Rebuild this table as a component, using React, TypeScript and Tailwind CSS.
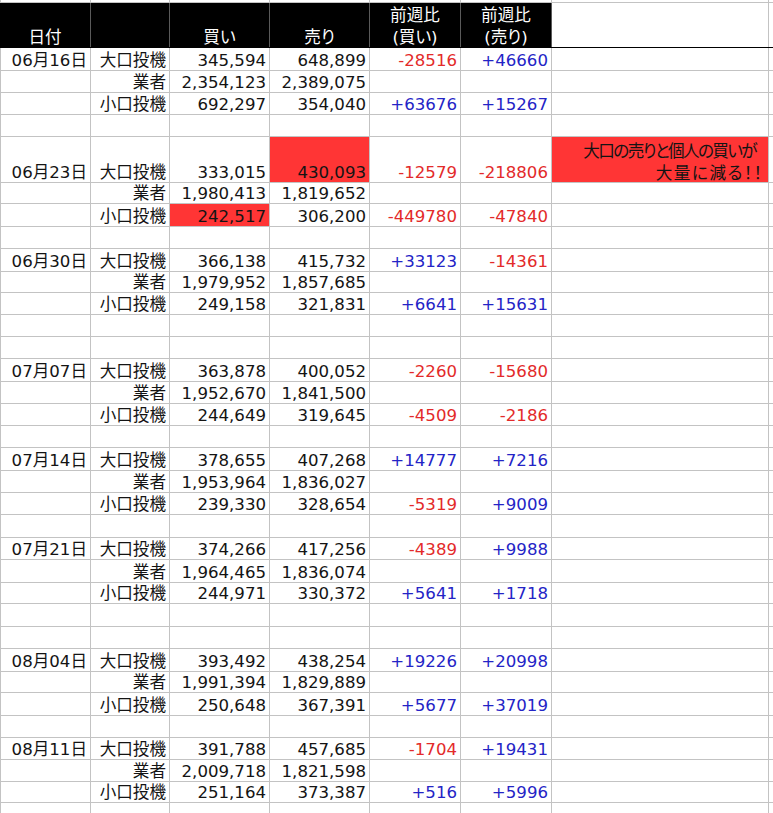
import React from "react";

type Row = {
  h: number;
  date?: string;
  type?: string;
  buy?: string;
  sell?: string;
  db?: string;
  ds?: string;
  buyRed?: boolean;
  sellRed?: boolean;
  note?: boolean;
};

const rows: Row[] = [
  { h: 23, date: "06月16日", type: "大口投機", buy: "345,594", sell: "648,899", db: "-28516", ds: "+46660" },
  { h: 22, type: "業者", buy: "2,354,123", sell: "2,389,075" },
  { h: 22, type: "小口投機", buy: "692,297", sell: "354,040", db: "+63676", ds: "+15267" },
  { h: 22 },
  { h: 45, date: "06月23日", type: "大口投機", buy: "333,015", sell: "430,093", db: "-12579", ds: "-218806", sellRed: true, note: true },
  { h: 22, type: "業者", buy: "1,980,413", sell: "1,819,652" },
  { h: 23, type: "小口投機", buy: "242,517", sell: "306,200", db: "-449780", ds: "-47840", buyRed: true },
  { h: 22 },
  { h: 23, date: "06月30日", type: "大口投機", buy: "366,138", sell: "415,732", db: "+33123", ds: "-14361" },
  { h: 21, type: "業者", buy: "1,979,952", sell: "1,857,685" },
  { h: 22, type: "小口投機", buy: "249,158", sell: "321,831", db: "+6641", ds: "+15631" },
  { h: 22 },
  { h: 22 },
  { h: 23, date: "07月07日", type: "大口投機", buy: "363,878", sell: "400,052", db: "-2260", ds: "-15680" },
  { h: 22, type: "業者", buy: "1,952,670", sell: "1,841,500" },
  { h: 22, type: "小口投機", buy: "244,649", sell: "319,645", db: "-4509", ds: "-2186" },
  { h: 22 },
  { h: 23, date: "07月14日", type: "大口投機", buy: "378,655", sell: "407,268", db: "+14777", ds: "+7216" },
  { h: 22, type: "業者", buy: "1,953,964", sell: "1,836,027" },
  { h: 22, type: "小口投機", buy: "239,330", sell: "328,654", db: "-5319", ds: "+9009" },
  { h: 23 },
  { h: 22, date: "07月21日", type: "大口投機", buy: "374,266", sell: "417,256", db: "-4389", ds: "+9988" },
  { h: 23, type: "業者", buy: "1,964,465", sell: "1,836,074" },
  { h: 21, type: "小口投機", buy: "244,971", sell: "330,372", db: "+5641", ds: "+1718" },
  { h: 23 },
  { h: 22 },
  { h: 23, date: "08月04日", type: "大口投機", buy: "393,492", sell: "438,254", db: "+19226", ds: "+20998" },
  { h: 21, type: "業者", buy: "1,991,394", sell: "1,829,889" },
  { h: 23, type: "小口投機", buy: "250,648", sell: "367,391", db: "+5677", ds: "+37019" },
  { h: 22 },
  { h: 22, date: "08月11日", type: "大口投機", buy: "391,788", sell: "457,685", db: "-1704", ds: "+19431" },
  { h: 22, type: "業者", buy: "2,009,718", sell: "1,821,598" },
  { h: 21, type: "小口投機", buy: "251,164", sell: "373,387", db: "+516", ds: "+5996" },
  { h: 22 },
];

const heightClass: Record<number, string> = {
  21: "h-[21px]",
  22: "h-[22px]",
  23: "h-[23px]",
  45: "h-[45px]",
};

const grid = "grid grid-cols-[91px_79px_100px_100px_91px_91px_217px_1fr]";
const cell =
  "border-r border-b border-[#c3c3c3] flex items-end justify-end pr-[3px] leading-[18px] whitespace-nowrap overflow-hidden";

function diffClass(v?: string) {
  if (!v) return "";
  return v.startsWith("-") ? "text-[#e32a2a]" : "text-[#2424c6]";
}

export default function App() {
  return (
    <div
      className="w-[773px] h-[813px] overflow-hidden bg-white text-[#141414] text-[16.6px] [font-feature-settings:'palt']"
      style={{ fontFamily: '"DejaVu Sans", "Noto Sans CJK JP", sans-serif' }}
    >
      {/* top sliver of previous row */}
      <div className={`${grid} h-[3px]`}>
        <div className="border-l border-r border-b border-[#c3c3c3]" />
        <div className="border-r border-b border-[#c3c3c3]" />
        <div className="border-r border-b border-[#c3c3c3]" />
        <div className="border-r border-b border-[#c3c3c3]" />
        <div className="border-r border-b border-[#c3c3c3]" />
        <div className="border-r border-b border-[#c3c3c3]" />
        <div className="border-r border-b border-[#c3c3c3]" />
        <div className="border-b border-[#c3c3c3]" />
      </div>

      {/* header */}
      <div className={`${grid} h-[45px] border-b border-black`}>
        <div className="bg-black text-white border-r border-[#5a5a5a] flex items-end justify-center leading-[18px]">日付</div>
        <div className="bg-black border-r border-[#5a5a5a]" />
        <div className="bg-black text-white border-r border-[#5a5a5a] flex items-end justify-center leading-[18px]">買い</div>
        <div className="bg-black text-white border-r border-[#5a5a5a] flex items-end justify-center leading-[18px]">売り</div>
        <div className="bg-black text-white border-r border-[#5a5a5a] flex flex-col items-center justify-end leading-[22px]">
          <div className="flex flex-col items-center translate-y-[2px]">
            <span>前週比</span>
            <span>(買い)</span>
          </div>
        </div>
        <div className="bg-black text-white border-r border-[#5a5a5a] flex flex-col items-center justify-end leading-[22px]">
          <div className="flex flex-col items-center translate-y-[2px]">
            <span>前週比</span>
            <span>(売り)</span>
          </div>
        </div>
        <div className="border-r border-[#c3c3c3]" />
        <div />
      </div>

      {rows.map((r, i) => (
        <div key={i} className={`${grid} ${heightClass[r.h]}`}>
          <div className={`${cell} border-l`}>{r.date}</div>
          <div className={cell}>{r.type}</div>
          <div className={`${cell} ${r.buyRed ? "bg-[#ff3535]" : ""}`}>{r.buy}</div>
          <div className={`${cell} ${r.sellRed ? "bg-[#ff3535]" : ""}`}>{r.sell}</div>
          <div className={`${cell} pr-[2px] ${diffClass(r.db)}`}>{r.db}</div>
          <div className={`${cell} pr-[2px] ${diffClass(r.ds)}`}>{r.ds}</div>
          {r.note ? (
            <div className="border-r border-b border-[#c3c3c3] bg-[#ff3535] flex flex-col items-end justify-end pr-[6px] whitespace-nowrap">
              <span className="leading-[29px] tracking-[-1.6px] mr-[6px]">大口の売りと個人の買いが</span>
              <span className="leading-[16px] tracking-[1.5px] -mr-[1.5px]">大量に減る！！</span>
            </div>
          ) : (
            <div className="border-r border-b border-[#c3c3c3]" />
          )}
          <div className="border-b border-[#c3c3c3]" />
        </div>
      ))}
    </div>
  );
}
